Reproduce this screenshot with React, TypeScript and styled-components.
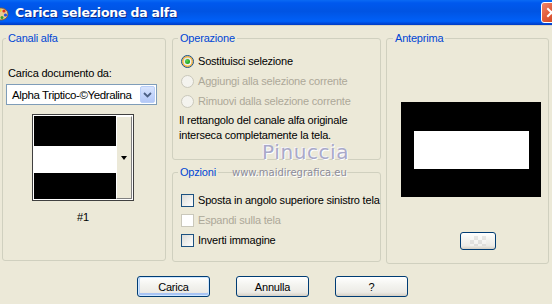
import React from "react";
import styled, { createGlobalStyle, css } from "styled-components";

const GlobalStyle = createGlobalStyle`
  html, body {
    margin: 0;
    padding: 0;
    background: #ece9d8;
  }
  body {
    font-family: "Liberation Sans", Arial, sans-serif;
    font-size: 11px;
    letter-spacing: -0.2px;
    color: #000;
  }
`;

const Window = styled.div`
  position: relative;
  width: 552px;
  height: 304px;
  overflow: hidden;
  background: #ece9d8;
`;

const TitleBar = styled.div`
  height: 25px;
  display: flex;
  align-items: center;
  overflow: hidden;
  background: linear-gradient(
    to bottom,
    #0a6af4 0%,
    #0058ee 12%,
    #0054e3 45%,
    #0060f8 85%,
    #0048d8 94%,
    #003cc4 100%
  );
  border-bottom: 1px solid #d8d4c4;
`;

const AppIcon = styled.svg`
  width: 16px;
  height: 16px;
  margin-left: -7px;
  flex: none;
`;

const TitleText = styled.div`
  margin-left: 6px;
  color: #fff;
  font-family: "DejaVu Sans", "Liberation Sans", sans-serif;
  font-weight: bold;
  font-size: 12.5px;
  letter-spacing: -0.2px;
  text-shadow: 1px 1px 0 #0a2a8a;
  flex: 1;
`;

const CloseButton = styled.div`
  width: 21px;
  height: 21px;
  margin-right: -10px;
  box-sizing: border-box;
  border: 1px solid #fff;
  border-radius: 3px;
  background: linear-gradient(135deg, #f0866a 0%, #e25c3a 45%, #c8401c 100%);
  display: flex;
  align-items: center;
  justify-content: center;
  flex: none;
`;

const Body = styled.div`
  padding: 6px 1px 0 2px;
`;

const GroupsRow = styled.div`
  display: flex;
  align-items: flex-start;
`;

const Group = styled.fieldset<{ $w: number; $h: number; $indent?: number }>`
  margin: 0;
  padding: 0;
  width: ${(p) => p.$w}px;
  height: ${(p) => p.$h}px;
  box-sizing: border-box;
  border: 1px solid #d0d0bf;
  border-radius: 3px;
  min-inline-size: 0;
  & > legend {
    margin-left: ${(p) => p.$indent ?? 5}px;
    padding: 0 2px;
    color: #0046d5;
    line-height: 13px;
  }
`;

const RightGroup = styled(Group)`
  margin-left: 5px;
`;

const LeftInner = styled.div`
  padding: 22px 0 0 3px;
  display: flex;
  flex-direction: column;
`;

const Label = styled.div`
  padding-left: 2px;
  line-height: 13px;
`;

const Select = styled.div`
  margin-top: 4px;
  width: 151px;
  height: 21px;
  box-sizing: border-box;
  border: 1px solid #7f9db9;
  background: #fff;
  display: flex;
  align-items: center;
  padding: 1px;
`;

const SelectValue = styled.div`
  flex: 1;
  padding-left: 4px;
  white-space: nowrap;
  overflow: hidden;
  font-size: 11.5px;
  letter-spacing: -0.4px;
`;

const SelectButton = styled.div`
  width: 15px;
  height: 17px;
  box-sizing: border-box;
  border: 1px solid #bacff8;
  border-radius: 2px;
  background: linear-gradient(to bottom, #d8e4fd 0%, #c1d3fb 60%, #b4c8f6 100%);
  display: flex;
  align-items: center;
  justify-content: center;
  flex: none;
`;

const ThumbColumn = styled.div`
  margin: 9px 0 0 26px;
  width: 102px;
  display: flex;
  flex-direction: column;
  align-items: center;
`;

const ThumbBox = styled.div`
  width: 102px;
  height: 87px;
  box-sizing: border-box;
  border: 1px solid #404040;
  background: #fff;
  display: flex;
  padding: 1px;
`;

const ThumbImage = styled.div`
  flex: 1;
  display: flex;
  flex-direction: column;
`;

const Band = styled.div<{ $h: number; $black?: boolean }>`
  height: ${(p) => p.$h}px;
  background: ${(p) => (p.$black ? "#000" : "#fff")};
`;

const ThumbDrop = styled.div`
  width: 16px;
  box-sizing: border-box;
  border: 1px solid #808080;
  border-top-color: #fff;
  border-left-color: #fff;
  background: #ece9d8;
  display: flex;
  align-items: center;
  justify-content: center;
`;

const Triangle = styled.div`
  width: 0;
  height: 0;
  border-left: 3.5px solid transparent;
  border-right: 3.5px solid transparent;
  border-top: 4px solid #000;
`;

const ThumbCaption = styled.div`
  margin-top: 10px;
  line-height: 13px;
`;

const MiddleColumn = styled.div`
  margin-left: 6px;
  display: flex;
  flex-direction: column;
  gap: 6px;
`;

const OptionList = styled.div<{ $top: number }>`
  padding: ${(p) => p.$top}px 0 0 6px;
  display: flex;
  flex-direction: column;
`;

const OptionRow = styled.div<{ $disabled?: boolean }>`
  height: 20px;
  margin-left: 2px;
  display: flex;
  align-items: center;
  gap: 4px;
  color: ${(p) => (p.$disabled ? "#aca899" : "#000")};
  white-space: nowrap;
`;

const Radio = styled.span<{ $checked?: boolean; $disabled?: boolean }>`
  position: relative;
  width: 13px;
  height: 13px;
  box-sizing: border-box;
  border-radius: 50%;
  border: 1px solid ${(p) => (p.$disabled ? "#cac8bb" : "#1c5180")};
  background: ${(p) =>
    p.$disabled ? "#f4f3ee" : "linear-gradient(135deg, #dcdcd7 0%, #fff 100%)"};
  flex: none;
  ${(p) =>
    p.$checked &&
    css`
      box-shadow: inset 0 0 0 1.5px #f8b33c;
      &::after {
        content: "";
        position: absolute;
        left: 3px;
        top: 3px;
        width: 5px;
        height: 5px;
        border-radius: 50%;
        background: radial-gradient(circle at 35% 35%, #55d655 0%, #21a121 70%);
      }
    `}
`;

const Checkbox = styled.span<{ $disabled?: boolean }>`
  width: 13px;
  height: 13px;
  box-sizing: border-box;
  border: 1px solid ${(p) => (p.$disabled ? "#cac8bb" : "#1c5180")};
  background: ${(p) =>
    p.$disabled ? "#fff" : "linear-gradient(135deg, #dcdcd7 0%, #fff 100%)"};
  flex: none;
`;

const Note = styled.div`
  margin-top: 2px;
  line-height: 15px;
`;

const PreviewInner = styled.div`
  display: flex;
  flex-direction: column;
  padding-left: 14px;
`;

const PreviewCanvas = styled.div`
  margin-top: 57px;
  width: 140px;
  height: 95px;
  background: #000;
  display: flex;
  align-items: center;
  padding-left: 13px;
  box-sizing: border-box;
`;

const PreviewBar = styled.div`
  width: 115px;
  height: 38px;
  background: #fff;
`;

const buttonBase = css`
  box-sizing: border-box;
  border: 1px solid #003c74;
  border-radius: 3px;
  background: linear-gradient(to bottom, #fff 0%, #f4f4f0 40%, #ecebe6 80%, #d6d0c5 100%);
  display: flex;
  align-items: center;
  justify-content: center;
  font-family: inherit;
  font-size: 11px;
  color: #000;
  padding: 0;
`;

const SmallButton = styled.div`
  ${buttonBase};
  margin: 35px 0 0 59px;
  width: 36px;
  height: 18px;
`;

const Checker = styled.div`
  width: 16px;
  height: 10px;
  opacity: 0.35;
  background-color: #fff;
  background-image: linear-gradient(45deg, #c8c8c8 25%, transparent 25%, transparent 75%, #c8c8c8 75%),
    linear-gradient(45deg, #c8c8c8 25%, transparent 25%, transparent 75%, #c8c8c8 75%);
  background-size: 8px 8px;
  background-position: 0 0, 4px 4px;
`;

const ButtonRow = styled.div`
  margin-top: 12px;
  padding-left: 135px;
  display: flex;
  gap: 26px;
`;

const PushButton = styled.button<{ $default?: boolean }>`
  ${buttonBase};
  width: 73px;
  height: 21px;
  letter-spacing: -0.2px;
  ${(p) =>
    p.$default &&
    css`
      box-shadow: inset 0 0 0 1px #cee7ff, inset 0 -2px 0 1px #a8c4f4, inset 2px 0 0 0 #bcd4f6;
    `}
`;

const Watermark = styled.div`
  position: absolute;
  left: 232px;
  top: 140px;
  display: flex;
  flex-direction: column;
  align-items: flex-start;
  pointer-events: none;
  letter-spacing: 0;
`;

const WatermarkName = styled.div`
  margin-left: 30px;
  font-family: "DejaVu Sans", sans-serif;
  font-size: 20px;
  letter-spacing: 0.6px;
  color: #a9a9c9;
  text-shadow: 1px 1px 0 #fff, -1px -1px 0 #f4f4fa;
  line-height: 24px;
`;

const WatermarkUrl = styled.div`
  margin-top: 3px;
  font-family: "DejaVu Sans", sans-serif;
  font-size: 10px;
  color: #8c8c9a;
  line-height: 12px;
  text-shadow: 1px 1px 0 #fff;
`;

const operations = [
  { label: "Sostituisci selezione", checked: true, disabled: false },
  { label: "Aggiungi alla selezione corrente", checked: false, disabled: true },
  { label: "Rimuovi dalla selezione corrente", checked: false, disabled: true },
];

const options = [
  { label: "Sposta in angolo superiore sinistro tela", disabled: false },
  { label: "Espandi sulla tela", disabled: true },
  { label: "Inverti immagine", disabled: false },
];

export default function App() {
  return (
    <>
      <GlobalStyle />
      <Window>
        <TitleBar>
          <AppIcon viewBox="0 0 16 16">
            <ellipse cx="8" cy="9" rx="7" ry="6" fill="#e8c890" stroke="#8a5a20" strokeWidth="0.8" />
            <circle cx="11" cy="6" r="1.6" fill="#e03020" />
            <circle cx="12.5" cy="10" r="1.6" fill="#2050e0" />
            <circle cx="9" cy="12.5" r="1.5" fill="#30a030" />
            <circle cx="7" cy="5.5" r="1.4" fill="#f0d020" />
          </AppIcon>
          <TitleText>Carica selezione da alfa</TitleText>
          <CloseButton>
            <svg width="11" height="11" viewBox="0 0 11 11">
              <path d="M2 2 L9 9 M9 2 L2 9" stroke="#fff" strokeWidth="2" strokeLinecap="square" />
            </svg>
          </CloseButton>
        </TitleBar>

        <Body>
          <GroupsRow>
            <Group $w={164} $h={229} $indent={3}>
              <legend>Canali alfa</legend>
              <LeftInner>
                <Label>Carica documento da:</Label>
                <Select>
                  <SelectValue>Alpha Triptico-©Yedralina</SelectValue>
                  <SelectButton>
                    <svg width="9" height="6" viewBox="0 0 9 6">
                      <path d="M1 1 L4.5 4.5 L8 1" fill="none" stroke="#4d6185" strokeWidth="1.8" />
                    </svg>
                  </SelectButton>
                </Select>
                <ThumbColumn>
                  <ThumbBox>
                    <ThumbImage>
                      <Band $h={30} $black />
                      <Band $h={27} />
                      <Band $h={26} $black />
                    </ThumbImage>
                    <ThumbDrop>
                      <Triangle />
                    </ThumbDrop>
                  </ThumbBox>
                  <ThumbCaption>#1</ThumbCaption>
                </ThumbColumn>
              </LeftInner>
            </Group>

            <MiddleColumn>
              <Group $w={209} $h={128} $indent={5}>
                <legend>Operazione</legend>
                <OptionList $top={6}>
                  {operations.map((o) => (
                    <OptionRow key={o.label} $disabled={o.disabled}>
                      <Radio $checked={o.checked} $disabled={o.disabled} />
                      {o.label}
                    </OptionRow>
                  ))}
                  <Note>
                    Il rettangolo del canale alfa originale
                    <br />
                    interseca completamente la tela.
                  </Note>
                </OptionList>
              </Group>
              <Group $w={209} $h={96} $indent={5}>
                <legend>Opzioni</legend>
                <OptionList $top={11}>
                  {options.map((o) => (
                    <OptionRow key={o.label} $disabled={o.disabled}>
                      <Checkbox $disabled={o.disabled} />
                      {o.label}
                    </OptionRow>
                  ))}
                </OptionList>
              </Group>
            </MiddleColumn>

            <RightGroup $w={163} $h={232} $indent={6}>
              <legend>Anteprima</legend>
              <PreviewInner>
                <PreviewCanvas>
                  <PreviewBar />
                </PreviewCanvas>
                <SmallButton>
                  <Checker />
                </SmallButton>
              </PreviewInner>
            </RightGroup>
          </GroupsRow>

          <ButtonRow>
            <PushButton $default>Carica</PushButton>
            <PushButton>Annulla</PushButton>
            <PushButton>?</PushButton>
          </ButtonRow>
        </Body>

        <Watermark>
          <WatermarkName>Pinuccia</WatermarkName>
          <WatermarkUrl>www.maidiregrafica.eu</WatermarkUrl>
        </Watermark>
      </Window>
    </>
  );
}
